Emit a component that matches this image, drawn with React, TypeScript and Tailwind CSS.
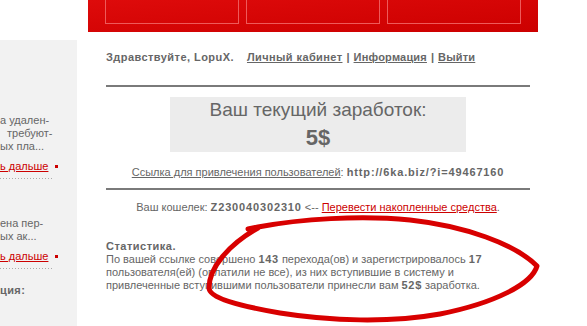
import React from "react";

function SideLink() {
  return (
    <div className="flex items-center whitespace-nowrap">
      <a className="text-[#cc0000] underline">ь дальше</a>
      <span className="ml-[7px] w-[3px] h-[3px] bg-[#cc0000]" />
    </div>
  );
}

function Dots() {
  return <div className="h-px w-[52px] bg-[linear-gradient(to_right,#aaa_1px,transparent_1px)] bg-[length:3px_1px]" />;
}

export default function App() {
  return (
    <div className="relative w-[587px] h-[326px] overflow-hidden bg-white text-[11px] leading-[13px] text-[#666] font-['Liberation_Sans',Arial,sans-serif]">
      {/* header */}
      <div className="ml-[88px] w-[450px] h-[32px] bg-linear-to-br from-[#de0b0b] to-[#cc0000] flex gap-[7px] pl-[17px]">
        <div className="w-[134px] h-[24px] border border-t-0 border-[#ee5a5a]" />
        <div className="w-[134px] h-[24px] border border-t-0 border-[#ee5a5a]" />
        <div className="w-[134px] h-[24px] border border-t-0 border-[#ee5a5a]" />
      </div>

      <div className="flex mt-[8px]">
        {/* sidebar */}
        <div className="w-[77px] h-[286px] bg-[#f2f2f2] overflow-hidden">
          <div className="pt-[74px] whitespace-nowrap">
            <div>а удален-</div>
            <div className="pl-[7px]">требуют-</div>
            <div>ых пла...</div>
            <div className="mt-[7px]"><SideLink /></div>
            <div className="mt-[5px]"><Dots /></div>
            <div className="mt-[38px]">ена пер-</div>
            <div>ых ак...</div>
            <div className="mt-[7px]"><SideLink /></div>
            <div className="mt-[5px]"><Dots /></div>
            <div className="mt-[15px] font-bold tracking-[0.4px]">ция:</div>
          </div>
        </div>

        {/* main */}
        <div className="ml-[29px] w-[424px] pt-[11px]">
          <div className="flex items-center font-bold whitespace-nowrap">
            <span className="tracking-[0.45px]">Здравствуйте, LopuX.</span>
            <a className="ml-[13px] underline tracking-[0.4px]">Личный кабинет</a>
            <span className="mx-[4px]">|</span>
            <a className="underline tracking-[0.2px]">Информация</a>
            <span className="mx-[4px]">|</span>
            <a className="underline tracking-[0.2px]">Выйти</a>
          </div>

          <div className="mt-[21px] h-[2px] bg-[#7a7a7a]" />

          <div className="mt-[10px] mx-auto w-[296px] h-[55px] bg-[#ececec] flex flex-col items-center pt-[1px]">
            <div className="text-[19px] leading-[24px]">Ваш текущий заработок:</div>
            <div className="mt-[3px] text-[22px] leading-[26px] font-bold">5$</div>
          </div>

          <div className="mt-[14px] text-center whitespace-nowrap">
            <a className="underline">Ссылка для привлечения пользователей</a>: <b className="tracking-[0.85px]">http://6ka.biz/?i=49467160</b>
          </div>

          <div className="mt-[9px] h-[2px] bg-[#7a7a7a]" />

          <div className="mt-[11px] text-center whitespace-nowrap">
            Ваш кошелек: <b className="tracking-[0.85px]">Z230040302310</b> &lt;-- <a className="text-[#cc0000] underline">Перевести накопленные средства</a>.
          </div>

          <div className="mt-[26px] font-bold tracking-[0.5px]">Статистика.</div>
          <p className="whitespace-nowrap">
            По вашей ссылке совершено <b className="tracking-[0.7px]">143</b> перехода(ов) и зарегистрировалось <b className="tracking-[0.7px]">17</b>
            <br />
            пользователя(ей) (оплатили не все), из них вступившие в систему и
            <br />
            привлеченные вступившими пользователи принесли вам <b className="tracking-[0.7px]">52$</b> заработка.
          </p>
        </div>
      </div>

      {/* hand-drawn annotation */}
      <svg className="absolute inset-0 pointer-events-none" width="587" height="326" viewBox="0 0 587 326">
        <path
          d="M 248 229 L 258 227 C 300 219, 360 215, 410 220 C 465 226, 515 244, 537 266 C 532 284, 495 303, 440 314 C 390 323, 330 321, 280 313 C 240 306, 209 298, 209 288 C 209 268, 228 245, 258 228"
          fill="none"
          stroke="#d80000"
          strokeWidth="5"
          strokeLinecap="round"
          strokeLinejoin="round"
        />
      </svg>
    </div>
  );
}
